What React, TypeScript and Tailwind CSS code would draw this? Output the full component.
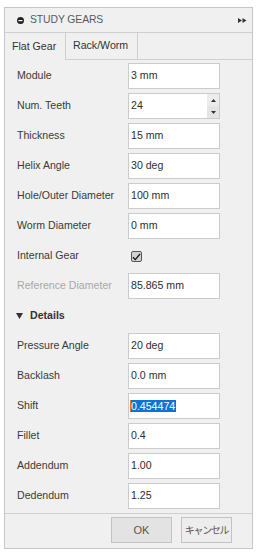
const font = { fontFamily: '"Liberation Sans", Arial, "Noto Sans CJK JP", sans-serif' }

const Row = ({ label, children, disabled }: any) => (
  <div className="flex items-center h-[26px]">
    <div className={`w-[123px] shrink-0 pl-[12px] whitespace-nowrap text-[10.6px] ${disabled ? 'text-[#a8a8a8]' : 'text-[#3a3a3a]'}`}>{label}</div>
    {children}
  </div>
)

const Field = ({ value, spinner, selected }: any) => (
  <div className="relative flex items-center w-[92px] h-[26px] shrink-0 bg-white border border-[#cbcbcb] pl-[1px] text-[10.6px] text-[#2e2e2e]">
    {selected ? (
      <span className="flex items-center h-[12px]">
        <span className="w-[1px] h-[12px] bg-[#f07a1a]" />
        <span className="bg-[#0a74d6] text-white h-[12px] leading-[12px] pr-[1px]">{value}</span>
      </span>
    ) : (
      <span className="pl-[1px]">{value}</span>
    )}
    {spinner && (
      <div className="absolute right-0 top-0 bottom-0 w-[12px] flex flex-col bg-[#e4e4e4]">
        <div className="flex-1 flex items-center justify-center bg-[#ececec]">
          <svg width="5" height="3" viewBox="0 0 5 3"><path d="M2.5 0L5 3H0z" fill="#333" /></svg>
        </div>
        <div className="flex-1 flex items-center justify-center">
          <svg width="5" height="3" viewBox="0 0 5 3"><path d="M0 0h5L2.5 3z" fill="#333" /></svg>
        </div>
      </div>
    )}
  </div>
)

export default function App() {
  return (
    <div className="w-[257px] h-[554px] bg-white pt-[7px] pl-[4px]" style={font}>
      <div className="w-[249px] bg-[#f0f0f0] border border-[#c6c6c6]">
        {/* header */}
        <div className="h-[25px] flex items-center border-b border-[#cfcfcf] pl-[12px] pr-[5px]">
          <svg width="7" height="7" viewBox="0 0 7 7" className="mr-[6px] mt-[1px]">
            <circle cx="3.5" cy="3.5" r="3.5" fill="#222" />
            <rect x="1.5" y="3" width="4" height="1.2" fill="#fff" />
          </svg>
          <span className="text-[10.4px] text-[#5a5a5a] tracking-[-0.1px]">STUDY GEARS</span>
          <svg width="9" height="5" viewBox="0 0 9 5" className="ml-auto mt-[1px]">
            <path d="M0 0L4 2.5L0 5z M4.5 0L8.5 2.5L4.5 5z" fill="#333" />
          </svg>
        </div>

        {/* tabs */}
        <div className="flex h-[27px] text-[10.6px] text-[#333]">
          <div className="w-[61px] border-r border-[#cfcfcf] flex items-center pl-[7px]">Flat Gear</div>
          <div className="w-[72px] border-r border-b border-[#cfcfcf] flex items-center pl-[7px]">Rack/Worm</div>
          <div className="flex-1 border-b border-[#cfcfcf]" />
        </div>

        {/* body */}
        <div className="flex flex-col gap-[4px] pt-[3px] pb-[4px]">
          <Row label="Module"><Field value="3 mm" /></Row>
          <Row label="Num. Teeth"><Field value="24" spinner /></Row>
          <Row label="Thickness"><Field value="15 mm" /></Row>
          <Row label="Helix Angle"><Field value="30 deg" /></Row>
          <Row label="Hole/Outer Diameter"><Field value="100 mm" /></Row>
          <Row label="Worm Diameter"><Field value="0 mm" /></Row>
          <Row label="Internal Gear">
            <div className="ml-[3px] mt-[1px] w-[11px] h-[11px] rounded-[2px] border border-[#555] bg-[#d2d2d2] flex items-center justify-center">
              <svg width="9" height="8" viewBox="0 0 9 8">
                <path d="M1 4.2L3.3 6.6L8 1" stroke="#111" strokeWidth="1.3" fill="none" />
              </svg>
            </div>
          </Row>
          <Row label="Reference Diameter" disabled><Field value="85.865 mm" /></Row>
          <div className="flex items-center h-[26px] pl-[11px]">
            <svg width="7" height="6" viewBox="0 0 7 6" className="mr-[7px]"><path d="M0 0h7L3.5 6z" fill="#333" /></svg>
            <span className="text-[10.6px] font-bold text-[#333]">Details</span>
          </div>
          <Row label="Pressure Angle"><Field value="20 deg" /></Row>
          <Row label="Backlash"><Field value="0.0 mm" /></Row>
          <Row label="Shift"><Field value="0.454474" selected /></Row>
          <Row label="Fillet"><Field value="0.4" /></Row>
          <Row label="Addendum"><Field value="1.00" /></Row>
          <Row label="Dedendum"><Field value="1.25" /></Row>
        </div>

        {/* footer */}
        <div className="border-t border-[#cfcfcf] flex justify-end gap-[9px] pt-[3px] pb-[5px] pr-[20px]">
          <button className="w-[61px] h-[26px] bg-[#e3e3e3] border border-[#c3c3c3] text-[11px] text-[#555]">OK</button>
          <button className="w-[51px] h-[26px] px-0 bg-[#ededed] border border-[#c3c3c3] text-[10px] text-[#555] tracking-[-1.3px] whitespace-nowrap">キャンセル</button>
        </div>
      </div>
    </div>
  )
}
